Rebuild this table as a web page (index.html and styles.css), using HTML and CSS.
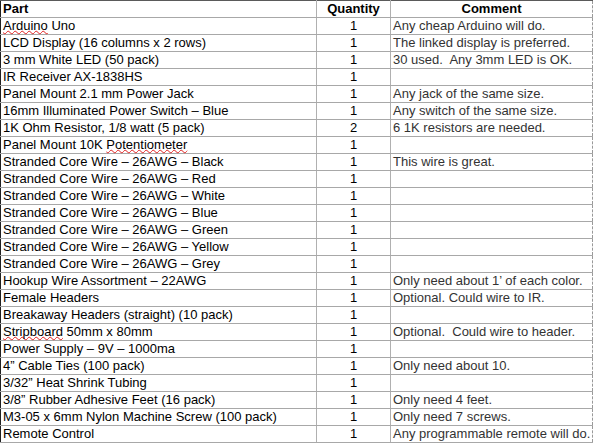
FILE: index.html
```html
<!DOCTYPE html>
<html>
<head>
<meta charset="utf-8">
<link rel="stylesheet" href="styles.css">
</head>
<body>
<table class="parts">
<colgroup><col class="c-part"><col class="c-qty"><col class="c-com"></colgroup>
<thead>
<tr><th class="part">Part</th><th class="qty">Quantity</th><th class="com">Comment</th></tr>
</thead>
<tbody>
<tr><td class="part"><span class="sp">Arduino</span> Uno</td><td class="qty">1</td><td class="com">Any cheap Arduino will do.</td></tr>
<tr><td class="part">LCD Display (16 columns x 2 rows)</td><td class="qty">1</td><td class="com">The linked display is preferred.</td></tr>
<tr><td class="part">3 mm White LED (50 pack)</td><td class="qty">1</td><td class="com">30 used.&nbsp; Any 3mm LED is OK.</td></tr>
<tr><td class="part">IR Receiver AX-1838HS</td><td class="qty">1</td><td class="com"></td></tr>
<tr><td class="part">Panel Mount 2.1 mm Power Jack</td><td class="qty">1</td><td class="com">Any jack of the same size.</td></tr>
<tr><td class="part">16mm Illuminated Power Switch – Blue</td><td class="qty">1</td><td class="com">Any switch of the same size.</td></tr>
<tr><td class="part">1K Ohm Resistor, 1/8 watt (5 pack)</td><td class="qty">2</td><td class="com">6 1K resistors are needed.</td></tr>
<tr><td class="part">Panel Mount 10K <span class="sp">Potentiometer</span></td><td class="qty">1</td><td class="com"></td></tr>
<tr><td class="part">Stranded Core Wire – 26AWG – Black</td><td class="qty">1</td><td class="com">This wire is great.</td></tr>
<tr><td class="part">Stranded Core Wire – 26AWG – Red</td><td class="qty">1</td><td class="com"></td></tr>
<tr><td class="part">Stranded Core Wire – 26AWG – White</td><td class="qty">1</td><td class="com"></td></tr>
<tr><td class="part">Stranded Core Wire – 26AWG – Blue</td><td class="qty">1</td><td class="com"></td></tr>
<tr><td class="part">Stranded Core Wire – 26AWG – Green</td><td class="qty">1</td><td class="com"></td></tr>
<tr><td class="part">Stranded Core Wire – 26AWG – Yellow</td><td class="qty">1</td><td class="com"></td></tr>
<tr><td class="part">Stranded Core Wire – 26AWG – Grey</td><td class="qty">1</td><td class="com"></td></tr>
<tr><td class="part">Hookup Wire Assortment – 22AWG</td><td class="qty">1</td><td class="com">Only need about 1’ of each color.</td></tr>
<tr><td class="part">Female Headers</td><td class="qty">1</td><td class="com">Optional. Could wire to IR.</td></tr>
<tr><td class="part">Breakaway Headers (straight) (10 pack)</td><td class="qty">1</td><td class="com"></td></tr>
<tr><td class="part"><span class="sp">Stripboard</span> 50mm x 80mm</td><td class="qty">1</td><td class="com">Optional.&nbsp; Could wire to header.</td></tr>
<tr><td class="part">Power Supply – 9V – 1000ma</td><td class="qty">1</td><td class="com"></td></tr>
<tr><td class="part">4” Cable Ties (100 pack)</td><td class="qty">1</td><td class="com">Only need about 10.</td></tr>
<tr><td class="part">3/32” Heat Shrink Tubing</td><td class="qty">1</td><td class="com"></td></tr>
<tr><td class="part">3/8” Rubber Adhesive Feet (16 pack)</td><td class="qty">1</td><td class="com">Only need 4 feet.</td></tr>
<tr><td class="part">M3-05 x 6mm Nylon Machine Screw (100 pack)</td><td class="qty">1</td><td class="com">Only need 7 screws.</td></tr>
<tr><td class="part">Remote Control</td><td class="qty">1</td><td class="com">Any programmable remote will do.</td></tr>
</tbody>
</table>
</body>
</html>
```
FILE: styles.css
```css
html, body {
  margin: 0;
  padding: 0;
  background: #ffffff;
}
.parts {
  border-collapse: collapse;
  table-layout: fixed;
  width: 592px;
  font-family: "Liberation Sans", Arial, sans-serif;
  font-size: 13px;
  color: #000;
}
.c-part { width: 316px; }
.c-qty { width: 74px; }
.c-com { width: 202px; }
.parts th, .parts td {
  height: 16px;
  padding: 0 0 0 2px;
  line-height: 16px;
  border-bottom: 1px solid #a8a8a8;
  border-right: 1px solid #b0b0b0;
  white-space: nowrap;
  vertical-align: middle;
}
.parts th {
  border-top: 1px solid #5a5a5a;
  font-weight: bold;
}
.parts th.part { text-align: left; border-left: 1px solid #202020; }
.parts td.part { border-left: 1px solid #202020; }
.parts .qty { text-align: center; padding: 0; }
.parts th.com { text-align: center; padding: 0; }
.parts td.com { color: #333; }
.parts .com { border-right: 1px dashed #999; }
.sp {
  text-decoration-line: underline;
  text-decoration-style: wavy;
  text-decoration-color: #e02020;
  text-decoration-thickness: 1px;
  text-decoration-skip-ink: none;
  text-underline-offset: 0px;
}
```
